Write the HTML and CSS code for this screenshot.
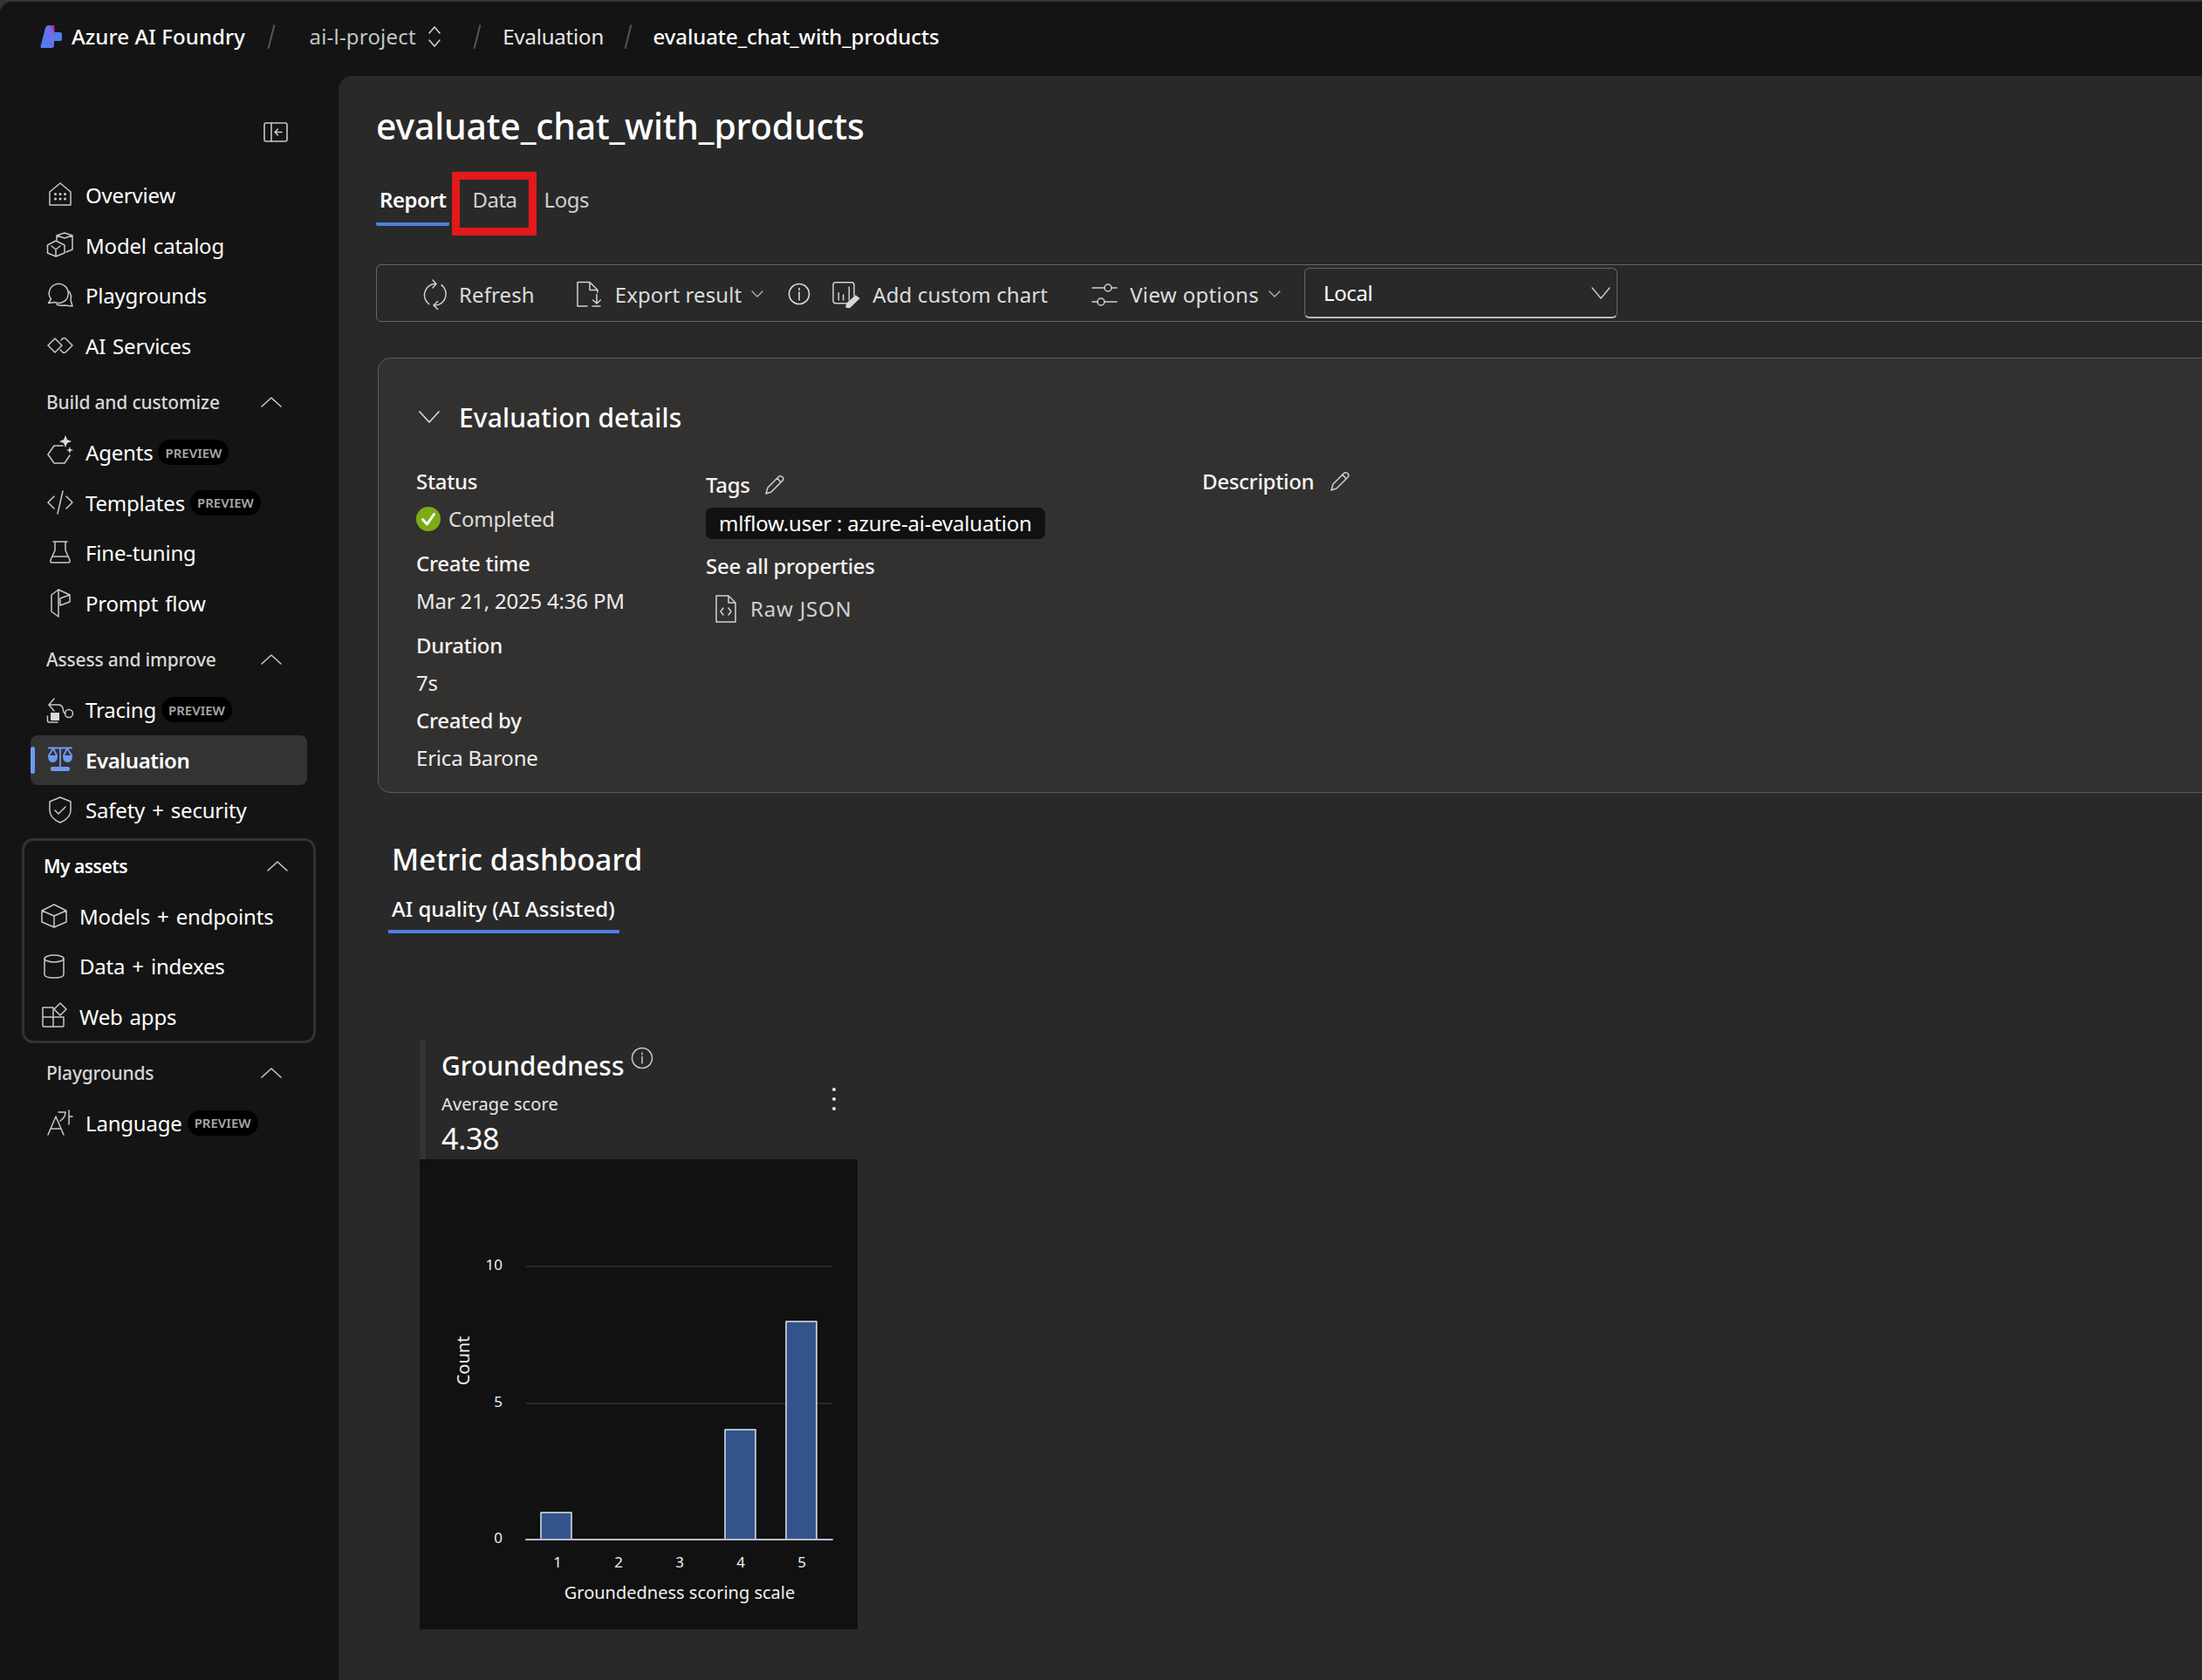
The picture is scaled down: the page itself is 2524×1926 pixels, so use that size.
FILE: index.html
```html
<!DOCTYPE html>
<html lang="en">
<head>
    <meta charset="UTF-8">
    <title>evaluate_chat_with_products - Azure AI Foundry</title>
    <link rel="stylesheet" href="styles.css">
</head>
<body>
<div class="app">
    <header class="topbar">
        <svg class="logo" viewBox="0 0 26 28">
            <defs>
                <linearGradient id="logoBody" x1="0" y1="1" x2="0.6" y2="0">
                    <stop offset="0" stop-color="#4f7bf0"/>
                    <stop offset="1" stop-color="#6f6fe6"/>
                </linearGradient>
                <linearGradient id="logoTop" x1="0" y1="0" x2="0" y2="1">
                    <stop offset="0" stop-color="#c7249a"/>
                    <stop offset="1" stop-color="#6a58da"/>
                </linearGradient>
            </defs>
            <path d="M16 9 H23 Q25 9 25 11 V17 Q25 19 23 19 H16 Z" fill="#4f7ce8"/>
            <path d="M0.500 25 Q0 27 2 27 L13 27 Q16 27 16 24 L16 1 L10 1 Q7 1 6 4 Z" fill="url(#logoBody)"/>
            <path d="M11 1 H13 Q16 1 16.500 4 V15 Q16 9 14 6 Z" fill="url(#logoTop)"/>
        </svg>
        <span class="brand">Azure AI Foundry</span>
        <span class="crumb-sep crumb-sep-first"></span>
        <span class="crumb crumb-muted">ai-l-project</span>
        <svg class="updown" viewBox="0 0 18 28"><path d="M3 10 L9 3 L15 10 M3 18 L9 25 L15 18"/></svg>
        <span class="crumb-sep crumb-sep-second"></span>
        <span class="crumb">Evaluation</span>
        <span class="crumb-sep crumb-sep-third"></span>
        <span class="crumb crumb-current">evaluate_chat_with_products</span>
    </header>

    <div class="body-row">
        <aside class="sidebar">
            <div class="collapse-row">
                <svg class="icon-collapse" viewBox="0 0 28 24">
                    <rect x="1" y="1" width="26" height="21" rx="2"/>
                    <path d="M9 1 V22 M21 11.500 H13 M16.500 8 L13 11.500 L16.500 15"/>
                </svg>
            </div>

            <a class="nav-item">
                <svg class="nav-icon" viewBox="0 0 30 30"><path d="M3 26 V11 L15 1 L27 11 V26 Z"/><path class="dots" d="M9.500 13.500 h.1 M15 13.500 h.1 M20.500 13.500 h.1 M9.500 19 h.1 M15 19 h.1 M20.500 19 h.1"/></svg>
                <span>Overview</span>
            </a>
            <a class="nav-item">
                <svg class="nav-icon" viewBox="0 0 30 30"><path d="M0.500 15 L10 10 L20 15 V24 L10 28 L0.500 24 Z M5 16 L10 20 L15 16 M10 20 V28"/><path d="M11 9 V4 L20 1 L29 4 V20 L22 23 M11 4 L20 7 L29 4"/></svg>
                <span>Model catalog</span>
            </a>
            <a class="nav-item">
                <svg class="nav-icon" viewBox="0 0 30 30"><path d="M4.500 19 A11 11 0 1 1 9 22.500 L1.500 23.500 Z"/><path d="M25 10 A11 11 0 0 1 27 20 L29 27 L20 26 Q15 27 11 25"/></svg>
                <span>Playgrounds</span>
            </a>
            <a class="nav-item">
                <svg class="nav-icon" viewBox="0 0 30 30"><path d="M1 14 L9 6 L17 14 L9 22 Z"/><path d="M16 8 L18 6 Q20 5 21 6 L29 14 L21 22 Q20 23 18 22 L15 19"/></svg>
                <span>AI Services</span>
            </a>

            <div class="nav-label">
                <span>Build and customize</span>
                <svg class="chev-up" viewBox="0 0 24 12"><path d="M1 11 L12 1 L23 11"/></svg>
            </div>
            <a class="nav-item">
                <svg class="nav-icon" viewBox="0 0 30 30"><path d="M18 7 H8 L1 17 L8 27 H20 L26 18"/><path class="solid" d="M21 -5 L23 0 L28 2 L23 4 L21 9 L19 4 L14 2 L19 0 Z M26 8 L27 11 L30 12 L27 13 L26 16 L25 13 L22 12 L25 11 Z"/></svg>
                <span>Agents</span><span class="pill">PREVIEW</span>
            </a>
            <a class="nav-item">
                <svg class="nav-icon" viewBox="0 0 30 30"><path d="M8 8 L1 15 L8 22 M22 8 L29 15 L22 22 M18 2 L12 28"/></svg>
                <span>Templates</span><span class="pill">PREVIEW</span>
            </a>
            <a class="nav-item">
                <svg class="nav-icon" viewBox="0 0 30 30"><path d="M7 2 H23 M9 2 V12 L4 23 Q3 26 6 26 H24 Q27 26 26 23 L21 12 V2 M6 19 H24"/></svg>
                <span>Fine-tuning</span>
            </a>
            <a class="nav-item">
                <svg class="nav-icon" viewBox="0 0 30 30"><path d="M5 5 L13 -1 V30 L5 24 Z"/><path d="M13 -1 L26 5 V13 L15 17 V9 L26 5"/></svg>
                <span>Prompt flow</span>
            </a>

            <div class="nav-label">
                <span>Assess and improve</span>
                <svg class="chev-up" viewBox="0 0 24 12"><path d="M1 11 L12 1 L23 11"/></svg>
            </div>
            <a class="nav-item">
                <svg class="nav-icon" viewBox="0 0 30 30"><path d="M8 2 L2 9 L8 16 M2 9 H14 Q18 10 18.500 15 Q19 19 21 19"/><circle cx="25" cy="19" r="4.500"/><rect class="solid" x="4" y="18" width="10" height="9"/><path d="M0.500 22 V27 Q0.500 29 2 29 H12"/></svg>
                <span>Tracing</span><span class="pill">PREVIEW</span>
            </a>
            <a class="nav-item nav-active">
                <svg class="nav-icon" viewBox="0 0 30 30"><g class="blue-fill"><path d="M1 10 H12 Q12 18 6.500 18 Q1 18 1 10 Z M18 10 H29 Q29 18 23.500 18 Q18 18 18 10 Z"/><rect x="4" y="23" width="22" height="5" rx="2"/></g><path class="blue-line" d="M2 1.500 H28 M15 1.500 V24 M7 2 L2 10 M7 2 L11 10 M23 2 L19 10 M23 2 L28 10"/></svg>
                <span>Evaluation</span>
            </a>
            <a class="nav-item">
                <svg class="nav-icon" viewBox="0 0 30 30"><path d="M3 5 L15 0 L27 5 V15 Q27 24 15 29 Q3 24 3 15 Z M9 15 L13 19 L21 11"/></svg>
                <span>Safety + security</span>
            </a>

            <div class="assets-box">
                <div class="nav-label assets-label">
                    <span>My assets</span>
                    <svg class="chev-up" viewBox="0 0 24 12"><path d="M1 11 L12 1 L23 11"/></svg>
                </div>
                <a class="nav-item">
                    <svg class="nav-icon" viewBox="0 0 30 30"><path d="M1 9 L15 2 L29 9 V22 L15 28 L1 22 Z M1 9 L15 15 L29 9 M15 15 V28"/></svg>
                    <span>Models + endpoints</span>
                </a>
                <a class="nav-item">
                    <svg class="nav-icon" viewBox="0 0 30 30"><ellipse cx="15" cy="6" rx="11" ry="4"/><path d="M4 6 V24 Q4 28 15 28 Q26 28 26 24 V6"/></svg>
                    <span>Data + indexes</span>
                </a>
                <a class="nav-item">
                    <svg class="nav-icon" viewBox="0 0 30 30"><path d="M2 5 H14 V27 H3 Q2 27 2 26 Z M2 16 H26 V26 Q26 27 25 27 H14"/><path d="M22 0 L29 7 L22 14 L15 7 Z"/></svg>
                    <span>Web apps</span>
                </a>
            </div>

            <div class="nav-label nav-label-after-box">
                <span>Playgrounds</span>
                <svg class="chev-up" viewBox="0 0 24 12"><path d="M1 11 L12 1 L23 11"/></svg>
            </div>
            <a class="nav-item">
                <svg class="nav-icon" viewBox="0 0 30 30"><path d="M1 29 L10 8 L19 29 M4 22 H16"/><path d="M13 3 H21 Q21 9 15 13 M25 1 V17 M25 8 H29"/></svg>
                <span>Language</span><span class="pill">PREVIEW</span>
            </a>
        </aside>

        <main class="main">
            <h1 class="page-title">evaluate_chat_with_products</h1>

            <div class="tabs">
                <a class="tab tab-active">Report</a>
                <a class="tab tab-data">Data</a>
                <a class="tab tab-logs">Logs</a>
            </div>

            <div class="toolbar">
                <a class="tool tool-refresh">
                    <svg class="tool-icon" viewBox="0 0 30 34"><path d="M16 5.300 A13 13 0 0 0 8.700 28.700 M13 1 L17 5.500 L13 10 M14 30 A13 13 0 0 0 23 6.700 M18.700 25.500 L14 30 L18.700 34.500"/></svg>
                    <span>Refresh</span>
                </a>
                <a class="tool tool-export">
                    <svg class="tool-icon" viewBox="0 0 30 34"><path d="M12 31 H1 V3.500 H15 L24 12.500 V15 M15 3.500 V12.500 H24 M23 17.500 V27.500 M18.700 24 L23 28 L27.300 24 M18 31 H27"/></svg>
                    <span>Export result</span>
                    <svg class="chev-small" viewBox="0 0 14 8"><path d="M1 1 L7 7 L13 1"/></svg>
                </a>
                <svg class="tool-info" viewBox="0 0 26 26"><circle cx="13" cy="13" r="11.500"/><path d="M13 11 V20 M13 6.500 V8.500"/></svg>
                <a class="tool tool-chart">
                    <svg class="tool-icon" viewBox="0 0 30 34"><path d="M16 27.700 H4 Q1 27.700 1 24.700 V6.700 Q1 3.700 4 3.700 H22 Q25 3.700 25 6.700 V19 M7.300 15.700 V24 M12.600 18 V24 M19.300 9 V24"/><path class="solid" d="M26.700 18.300 L31.700 22 L20 33.300 L15.300 32.700 L16 27.700 Z"/></svg>
                    <span>Add custom chart</span>
                </a>
                <a class="tool tool-view">
                    <svg class="tool-icon" viewBox="0 0 30 34"><path d="M0 10 H14 M22 10 H28 M0 26 H6 M14 26 H28"/><circle cx="18" cy="10" r="4"/><circle cx="10" cy="26" r="4"/></svg>
                    <span>View options</span>
                    <svg class="chev-small" viewBox="0 0 14 8"><path d="M1 1 L7 7 L13 1"/></svg>
                </a>
                <div class="scope-select">
                    <span>Local</span>
                    <svg class="chev-select" viewBox="0 0 22 14"><path d="M1 1 L11 13 L21 1"/></svg>
                </div>
            </div>

            <section class="details-card">
                <div class="details-head">
                    <svg class="chev-details" viewBox="0 0 24 14"><path d="M1 1 L12 13 L23 1"/></svg>
                    <h2>Evaluation details</h2>
                </div>
                <div class="details-cols">
                    <div class="col-info">
                        <div class="field">
                            <div class="field-label">Status</div>
                            <div class="field-value status-value">
                                <svg class="check" viewBox="0 0 28 28"><circle cx="14" cy="14" r="14"/><path d="M7.500 14.500 L12.500 20 L20.500 8.500"/></svg>
                                <span>Completed</span>
                            </div>
                        </div>
                        <div class="field field-gap">
                            <div class="field-label">Create time</div>
                            <div class="field-value">Mar 21, 2025 4:36 PM</div>
                        </div>
                        <div class="field field-gap">
                            <div class="field-label">Duration</div>
                            <div class="field-value">7s</div>
                        </div>
                        <div class="field">
                            <div class="field-label">Created by</div>
                            <div class="field-value">Erica Barone</div>
                        </div>
                    </div>
                    <div class="col-tags">
                        <div class="field-label edit-label">
                            <span>Tags</span>
                            <svg class="pencil" viewBox="0 0 24 24"><path d="M2 22 L4 15 L17 2 Q19 1 21 3 Q23 5 21 7 L8 20 Z M15 4 L19 9"/></svg>
                        </div>
                        <div class="tag-chip">mlflow.user : azure-ai-evaluation</div>
                        <div class="field-label see-all">See all properties</div>
                        <a class="raw-json">
                            <svg class="json-icon" viewBox="0 0 24 32"><path d="M1 1 H15 L23 9 V31 H1 Z M15 1 V9 H23 M9 15 L6 19 L9 23 M15 15 L18 19 L15 23"/></svg>
                            <span>Raw JSON</span>
                        </a>
                    </div>
                    <div class="col-desc">
                        <div class="field-label edit-label">
                            <span>Description</span>
                            <svg class="pencil pencil-desc" viewBox="0 0 24 24"><path d="M2 22 L4 15 L17 2 Q19 1 21 3 Q23 5 21 7 L8 20 Z M15 4 L19 9"/></svg>
                        </div>
                    </div>
                </div>
            </section>

            <h2 class="dash-title">Metric dashboard</h2>
            <div class="dash-tab">AI quality (AI Assisted)</div>

            <section class="metric">
                <div class="metric-head">
                    <div class="metric-text">
                        <div class="metric-name">
                            <span>Groundedness</span>
                            <svg class="metric-info" viewBox="0 0 26 26"><circle cx="13" cy="13" r="11.500"/><path d="M13 11.500 V19 M13 7 V9"/></svg>
                        </div>
                        <div class="metric-sub">Average score</div>
                        <div class="metric-value">4.38</div>
                    </div>
                    <div class="metric-menu"><i></i><i></i><i></i></div>
                </div>
                <svg class="chart" viewBox="0 0 502 539" width="502" height="539">
                    <line class="grid" x1="122" y1="123" x2="473" y2="123"/>
                    <line class="grid" x1="122" y1="280" x2="473" y2="280"/>
                    <rect class="bar" x="139" y="405" width="35" height="31"/>
                    <rect class="bar" x="350" y="310" width="35" height="126"/>
                    <rect class="bar" x="420" y="186" width="35" height="250"/>
                    <line class="axis" x1="122" y1="436" x2="473" y2="436"/>
                    <text class="tick" x="95" y="127" text-anchor="end">10</text>
                    <text class="tick" x="95" y="284" text-anchor="end">5</text>
                    <text class="tick" x="95" y="440" text-anchor="end">0</text>
                    <text class="tick" x="158" y="468" text-anchor="middle">1</text>
                    <text class="tick" x="228" y="468" text-anchor="middle">2</text>
                    <text class="tick" x="298" y="468" text-anchor="middle">3</text>
                    <text class="tick" x="368" y="468" text-anchor="middle">4</text>
                    <text class="tick" x="438" y="468" text-anchor="middle">5</text>
                    <text class="axis-title" x="298" y="504" text-anchor="middle">Groundedness scoring scale</text>
                    <text class="axis-title" transform="translate(57 231) rotate(-90)" text-anchor="middle">Count</text>
                </svg>
            </section>
        </main>
    </div>
</div>
</body>
</html>
```

FILE: styles.css
```css
* {
    box-sizing: border-box;
}

html,
body {
    margin: 0;
    height: 100%;
    overflow: hidden;
    background: #333;
}

body {
    font-family: "Noto Sans", "Open Sans", sans-serif;
    font-size: 24px;
    color: #fff;
}

svg {
    fill: none;
    stroke-linecap: round;
    stroke-linejoin: round;
    flex-shrink: 0;
    overflow: visible;
}

.app {
    height: calc(100% - 2px);
    margin-top: 2px;
    display: flex;
    flex-direction: column;
    background: #141414;
    border-top-left-radius: 14px;
    overflow: hidden;
}

/* top bar */
.topbar {
    height: 85px;
    padding: 0 0 6px 46px;
    display: flex;
    align-items: center;
    flex-shrink: 0;
    background: #141414;
}

.logo {
    width: 26px;
    height: 28px;
    margin-right: 10px;
}

.brand {
    font-size: 24px;
    font-weight: 500;
    letter-spacing: 0.1px;
    width: 199px;
    white-space: nowrap;
}

.crumb {
    font-size: 24px;
    letter-spacing: -0.2px;
    color: #e8e8e8;
    white-space: nowrap;
}

.crumb-muted {
    color: #c4c4c4;
    letter-spacing: 0.2px;
}

.crumb-current {
    color: #fff;
    font-weight: 500;
    letter-spacing: -0.1px;
}

.crumb-sep {
    width: 1.500px;
    height: 28px;
    background: #555;
    transform: rotate(14deg);
}

.crumb-sep-first {
    margin: 0 43px 0 29px;
}

.crumb-sep-second {
    margin: 0 29px 0 39px;
}

.crumb-sep-third {
    margin: 0 28px 0 27px;
}

.updown {
    width: 18px;
    height: 28px;
    margin-left: 12px;
    stroke: #d0d0d0;
    stroke-width: 1.600;
}

.body-row {
    flex: 1;
    display: flex;
    min-height: 0;
}

/* sidebar */
.sidebar {
    width: 388px;
    flex-shrink: 0;
    background: #141414;
}

.collapse-row {
    height: 108px;
    padding: 53px 58px 0 0;
    display: flex;
    justify-content: flex-end;
}

.icon-collapse {
    width: 28px;
    height: 24px;
    stroke: #c8c8c8;
    stroke-width: 1.600;
}

.nav-item {
    height: 57.600px;
    padding-left: 54px;
    display: flex;
    align-items: center;
    font-size: 24px;
    letter-spacing: -0.2px;
    word-spacing: 2px;
    white-space: nowrap;
}

.nav-icon {
    width: 30px;
    height: 30px;
    margin-right: 14px;
    stroke: #c8c8c8;
    stroke-width: 1.500;
}

.nav-icon .dots {
    stroke-width: 3;
}

.nav-icon .solid {
    fill: #d8d8d8;
    stroke: none;
}

.nav-icon .blue-fill {
    fill: #6e9bf0;
    stroke: none;
}

.nav-icon .blue-line {
    stroke: #6e9bf0;
    stroke-width: 1.800;
}

.nav-active {
    position: relative;
    margin-left: 35px;
    width: 317px;
    padding-left: 19px;
    border-radius: 8px;
    background: #333;
    font-weight: 600;
    letter-spacing: -0.4px;
}

.nav-active::before {
    content: "";
    position: absolute;
    left: 0;
    top: 13px;
    bottom: 13px;
    width: 5px;
    border-radius: 3px;
    background: #6e9bf0;
}

.nav-label {
    height: 57.600px;
    margin-top: 7px;
    padding: 0 65px 0 53px;
    display: flex;
    align-items: center;
    justify-content: space-between;
    font-size: 21px;
    font-weight: 500;
    letter-spacing: -0.2px;
    color: #d6d6d6;
}

.chev-up {
    width: 24px;
    height: 12px;
    stroke: #c8c8c8;
    stroke-width: 1.600;
}

.pill {
    height: 29px;
    margin-left: 6px;
    padding: 0 8px;
    display: flex;
    align-items: center;
    border-radius: 15px;
    background: #000;
    color: #a8a8a8;
    font-size: 15px;
    font-weight: 600;
    letter-spacing: 0;
}

.assets-box {
    width: 337px;
    height: 235px;
    margin: 3px 0 0 25px;
    border: 3px solid #333;
    border-radius: 13px;
}

.assets-box .nav-item {
    padding-left: 19px;
}

.assets-label {
    margin-top: 0;
    padding: 0 29px 0 22px;
    color: #fff;
    font-weight: 600;
    letter-spacing: -0.5px;
}

.nav-label-after-box {
    margin-top: 5px;
}

/* main panel */
.main {
    flex: 1;
    min-width: 0;
    padding: 31px 0 0 43px;
    background: #292929;
    border-top-left-radius: 16px;
    overflow: hidden;
}

.page-title {
    margin: 0;
    font-size: 41px;
    line-height: 52px;
    font-weight: 500;
    letter-spacing: -0.2px;
}

.tabs {
    margin-top: 35px;
    display: flex;
    height: 54px;
}

.tab {
    height: 54px;
    line-height: 48px;
    color: #d0d0d0;
    font-size: 24px;
    letter-spacing: -0.5px;
}

.tab-active {
    padding: 0 4px;
    color: #fff;
    font-weight: 600;
    border-bottom: 4px solid #4f7fe0;
    border-radius: 0 0 2px 2px;
}

.tab-data {
    position: relative;
    margin-left: 26px;
}

/* annotation drawn over the screenshot */
.tab-data::after {
    content: "";
    position: absolute;
    left: -23px;
    right: -22px;
    top: -8px;
    bottom: -11px;
    border: 9px solid #e3191b;
}

.tab-logs {
    margin-left: 31px;
}

.toolbar {
    height: 66px;
    margin: 44px -60px 0 0;
    padding: 2px 0 0 51px;
    display: flex;
    align-items: center;
    border: 1px solid #666;
    border-radius: 6px;
}

.tool {
    display: flex;
    align-items: center;
    font-size: 24px;
    letter-spacing: 0.1px;
    color: #dcdcdc;
    white-space: nowrap;
}

.tool-icon {
    width: 30px;
    height: 34px;
    margin-right: 13px;
    stroke: #d0d0d0;
    stroke-width: 1.500;
}

.tool-icon .solid {
    fill: #d8d8d8;
    stroke: none;
}

.tool-export {
    margin-left: 48px;
}

.tool-export .tool-icon {
    margin-right: 14px;
}

.tool-chart {
    margin-left: 25px;
}

.tool-chart .tool-icon {
    margin-right: 16px;
}

.tool-view {
    margin-left: 51px;
    letter-spacing: 0.35px;
}

.chev-small {
    width: 14px;
    height: 8px;
    margin-left: 11px;
    stroke: #b8b8b8;
    stroke-width: 1.300;
}

.tool-info {
    width: 26px;
    height: 26px;
    margin-left: 28px;
    stroke: #dcdcdc;
    stroke-width: 1.600;
}

.scope-select {
    width: 359px;
    height: 58px;
    margin: -2px 0 0 27px;
    padding: 0 7px 0 21px;
    display: flex;
    align-items: center;
    justify-content: space-between;
    border: 1px solid #666;
    border-bottom: 2px solid #bbb;
    border-radius: 6px;
    font-size: 24px;
    letter-spacing: -0.4px;
}

.chev-select {
    width: 22px;
    height: 14px;
    stroke: #c8c8c8;
    stroke-width: 1.500;
}

/* evaluation details */
.details-card {
    height: 499px;
    margin: 41px -60px 0 2px;
    padding: 44px 0 0 43px;
    background: #323130;
    border: 1px solid #5a5a5a;
    border-radius: 14px;
}

.details-head {
    height: 46px;
    display: flex;
    align-items: center;
}

.details-head h2 {
    margin: 0 0 0 22px;
    font-size: 30px;
    font-weight: 500;
    letter-spacing: 0.1px;
}

.chev-details {
    width: 24px;
    height: 14px;
    margin-left: 3px;
    stroke: #d8d8d8;
    stroke-width: 1.700;
}

.details-cols {
    margin-top: 29px;
    display: flex;
}

.col-info {
    width: 332px;
}

.col-tags {
    width: 569px;
    padding-top: 4px;
}

.field-label {
    height: 43px;
    line-height: 43px;
    font-size: 24px;
    font-weight: 500;
    letter-spacing: -0.3px;
    color: #f4f4f4;
}

.field-value {
    height: 43px;
    line-height: 43px;
    font-size: 24px;
    letter-spacing: -0.2px;
    color: #ececec;
}

.field-gap {
    margin-top: 8px;
}

.status-value {
    display: flex;
    align-items: center;
    color: #dcdcdc;
}

.check {
    width: 28px;
    height: 28px;
    margin-right: 9px;
}

.check circle {
    fill: #7cab16;
}

.check path {
    stroke: #fff;
    stroke-width: 3;
}

.edit-label {
    display: flex;
    align-items: center;
}

.pencil {
    width: 24px;
    height: 24px;
    margin-left: 16px;
    stroke: #d0d0d0;
    stroke-width: 1.500;
}

.pencil-desc {
    margin-left: 18px;
}

.tag-chip {
    width: 389px;
    height: 36px;
    margin-top: 5px;
    padding-left: 15px;
    line-height: 36px;
    border-radius: 7px;
    background: #111;
    font-size: 24px;
    letter-spacing: -0.2px;
    white-space: nowrap;
}

.see-all {
    margin-top: 9px;
}

.raw-json {
    margin: 6px 0 0 11px;
    height: 43px;
    display: flex;
    align-items: center;
    color: #d0d0d0;
    font-size: 24px;
    letter-spacing: 0.8px;
}

.json-icon {
    width: 24px;
    height: 32px;
    margin-right: 16px;
    stroke: #c8d4dc;
    stroke-width: 1.500;
}

/* metric dashboard */
.dash-title {
    margin: 51px 0 0 18px;
    font-size: 34px;
    line-height: 50px;
    font-weight: 500;
    letter-spacing: 0;
}

.dash-tab {
    width: 265px;
    margin: 13px 0 0 14px;
    padding: 0 4px 5px;
    line-height: 38px;
    font-size: 24px;
    font-weight: 500;
    letter-spacing: 0;
    white-space: nowrap;
    border-bottom: 4px solid #4f7fe0;
}

.metric {
    width: 502px;
    margin: 122px 0 0 50px;
}

.metric-head {
    height: 137px;
    padding: 8px 25px 0 18px;
    display: flex;
    justify-content: space-between;
    border-left: 7px solid #333;
}

.metric-name {
    height: 44px;
    display: flex;
    font-size: 30px;
    line-height: 44px;
    font-weight: 500;
    letter-spacing: 0;
}

.metric-info {
    width: 26px;
    height: 26px;
    margin: 0 0 0 8px;
    stroke: #c8c8c8;
    stroke-width: 1.500;
}

.metric-sub {
    margin-top: 6px;
    line-height: 32px;
    font-size: 20px;
    letter-spacing: 0.1px;
    color: #e8e8e8;
}

.metric-value {
    line-height: 46px;
    font-size: 34px;
    letter-spacing: -0.3px;
}

.metric-menu {
    height: 26px;
    margin-top: 47px;
    display: flex;
    flex-direction: column;
    justify-content: space-between;
}

.metric-menu i {
    width: 4px;
    height: 4px;
    border-radius: 50%;
    background: #e8e8e8;
}

.chart {
    display: block;
    background: #111;
}

.grid {
    stroke: #303030;
    stroke-width: 1.500;
}

.axis {
    stroke: #b8bcd0;
    stroke-width: 2;
}

.bar {
    fill: #32548a;
    stroke: #dfe4ee;
    stroke-width: 1.500;
}

.tick {
    fill: #f0f0f0;
    stroke: none;
    font-size: 17px;
}

.axis-title {
    fill: #f0f0f0;
    stroke: none;
    font-size: 20px;
    letter-spacing: 0;
}
```
